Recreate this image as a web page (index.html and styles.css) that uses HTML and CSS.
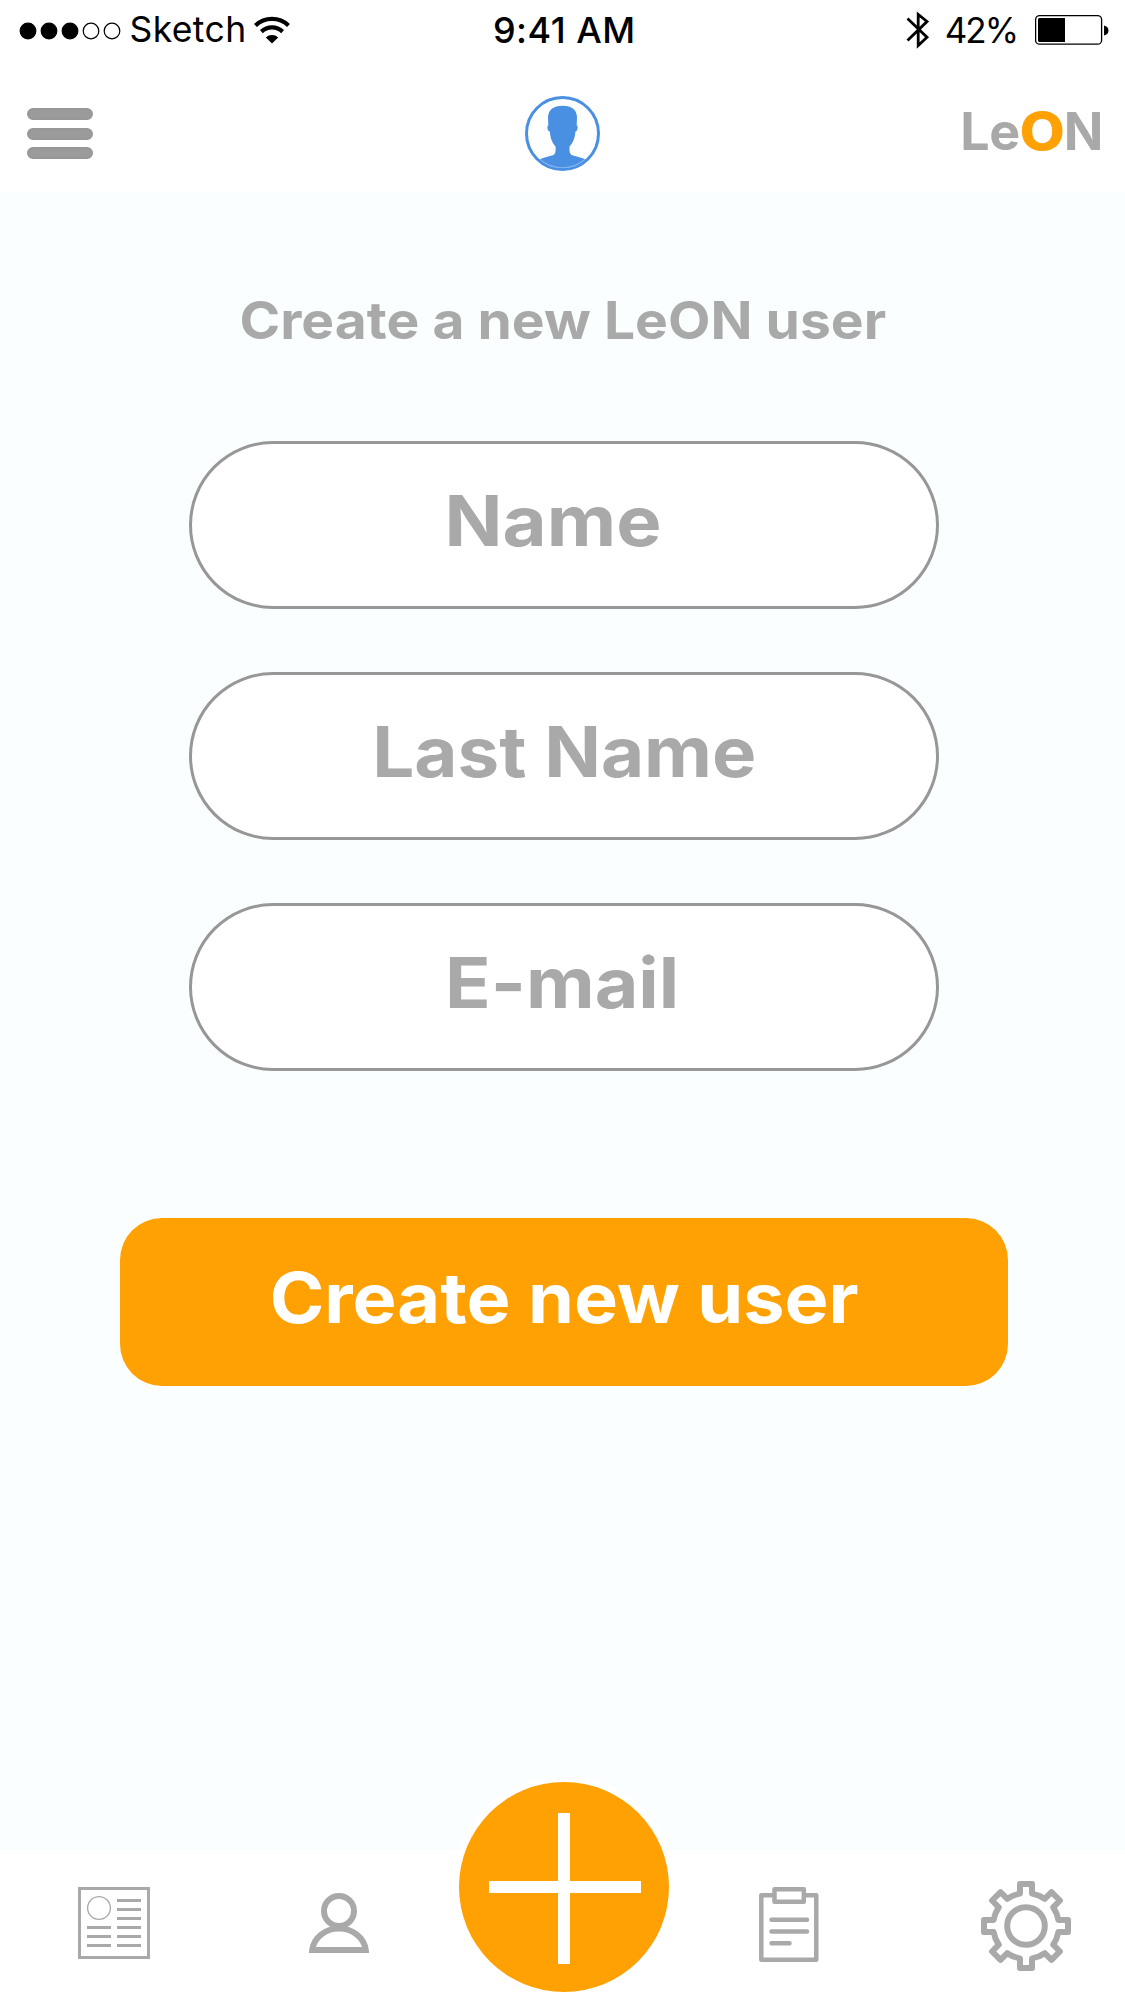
FILE: index.html
```html
<!DOCTYPE html>
<html lang="en">
<head>
<meta charset="utf-8">
<title>LeON – Create user</title>
<link rel="stylesheet" href="styles.css">
</head>
<body>
<div class="app">
  <header class="top">
    <div class="status">
      <div class="carrier">
        <svg width="102" height="18" viewBox="0 0 102 18"><g stroke="#000" stroke-width="1.2"><circle cx="9" cy="9" r="7.8"/><circle cx="30" cy="9" r="7.8"/><circle cx="51" cy="9" r="7.8"/><circle cx="72" cy="9" r="7.8" fill="none"/><circle cx="93" cy="9" r="7.8" fill="none"/></g></svg>
        <span class="carrier-name">Sketch</span>
        <svg class="wifi" width="36" height="28" viewBox="0 0 36 28"><g fill="none" stroke="#000" stroke-width="4.2"><path d="M1.5 9.4A24 24 0 0 1 34.5 9.4"/><path d="M7.4 15.6A15.5 15.5 0 0 1 28.6 15.6"/></g><path d="M11.8 21.4A9 9 0 0 1 24.2 21.4L18 27.5Z"/></svg>
      </div>
      <time class="clock">9:41 AM</time>
      <div class="power">
        <svg width="24" height="40" viewBox="0 0 24 40"><path d="M1.5 8.5L21 27.2L12.2 35.5V4.5L21 11.5L1.5 30.5" fill="none" stroke="#000" stroke-width="2.8"/></svg>
        <span class="percent">42%</span>
        <svg class="battery" width="75" height="30" viewBox="0 0 75 30"><rect x=".6" y=".6" width="66" height="28.6" rx="4" fill="none" stroke="#000" stroke-width="1.3"/><path d="M4.5 3H30V27H4.500Q3 27 3 25.500V4.500Q3 3 4.500 3ZM69 10.500Q73.500 11.500 73.500 15.500T69 20.500Z"/></svg>
      </div>
    </div>
    <div class="bar">
      <div class="menu"><i></i><i></i><i></i></div>
      <svg class="avatar" width="75" height="75" viewBox="0 0 75 75"><circle cx="37.500" cy="37.500" r="36" fill="none" stroke="#4a90e2" stroke-width="3"/><path fill="#4a90e2" d="M37.600 9.700C47 9.700 52 14 52 21.500L51.700 29.300Q53.300 30 52.300 33.500Q51.800 35.500 50.500 35.600C50 42 48 47 44.500 50.700V54.500Q44.500 58 46.500 59C51 60.800 56 61 60.500 63.500A35 35 0 0 1 14.500 63.500C19 61 24 60.800 28.500 59Q30.600 58 30.600 54.500V50.700C27 47 25.200 42 24.800 35.600Q23.200 35.500 22.700 33.500Q21.800 30 23.300 29.300L23 21.500C23 14 28.500 9.700 37.600 9.700Z"/><path d="M15 63.200A34.300 34.300 0 0 0 60 63.200" fill="none" stroke="#a8c9f1" stroke-width=".6"/></svg>
      <div class="logo"><span>Le<b>O</b>N</span></div>
    </div>
  </header>
  <main class="content">
    <h1 class="title"><span>Create a new LeON user</span></h1>
    <form class="form">
      <div class="field field-name"><span>Name</span></div>
      <div class="field field-last"><span>Last Name</span></div>
      <div class="field field-mail"><span>E-mail</span></div>
      <button class="submit" type="button"><span>Create new user</span></button>
    </form>
  </main>
  <nav class="tabs">
    <svg class="news" width="72" height="72" viewBox="0 0 72 72" fill="none" stroke="#a9a9a9"><path stroke-width="3" d="M1.500 1.500H70.500V70.500H1.500ZM39 13.500H63M39 22.500H63M39 31.500H63M39 40.500H63M39 49.500H63M39 58.500H63M9 40.500H33M9 49.500H33M9 58.500H33"/><circle cx="21" cy="21" r="11.400" stroke-width="1.300"/></svg>
    <svg class="person" width="60" height="60" viewBox="0 0 60 60" fill="none" stroke="#a9a9a9" stroke-width="6"><circle cx="30" cy="18" r="15"/><path d="M3.200 57A27 24.500 0 0 1 56.800 57Z"/></svg>
    <svg class="clipboard" width="60" height="75" viewBox="0 0 60 75" fill="none" stroke="#a9a9a9" stroke-width="4.500" stroke-linejoin="round" stroke-linecap="round"><path d="M15.500 8.300H2.300V72.700H57.300V8.300H44.800M15.500 2.300H44.800V14.800H15.500ZM12.500 32.800H48M12.500 44.600H48M12.500 56.300H30.500"/></svg>
    <svg class="gear" width="90" height="90" viewBox="0 0 90 90" fill="none" stroke="#a9a9a9" stroke-width="6" stroke-linejoin="round"><circle cx="45" cy="45" r="18.800"/><path d="M39 3H51V12.600A33 33 0 0 1 63.700 17.800L70.500 11.100L78.900 19.500L72.200 26.300A33 33 0 0 1 77.400 39H87V51H77.400A33 33 0 0 1 72.200 63.700L78.900 70.500L70.500 78.900L63.700 72.200A33 33 0 0 1 51 77.400V87H39V77.400A33 33 0 0 1 26.300 72.200L19.500 78.900L11.100 70.500L17.800 63.700A33 33 0 0 1 12.600 51H3V39H12.600A33 33 0 0 1 17.800 26.300L11.100 19.500L19.500 11.100L26.300 17.800A33 33 0 0 1 39 12.600Z"/></svg>
    <svg class="add" width="222" height="222" viewBox="0 0 222 222"><circle cx="111" cy="111" r="111" fill="#fff"/><circle cx="111" cy="111" r="105" fill="#ffa103"/><path d="M36 111H188M111 37V188" stroke="#fff" stroke-width="12"/></svg>
  </nav>
</div>
</body>
</html>
```
FILE: styles.css
```css
* { box-sizing: border-box; }
body { margin: 0; font-family: Inter, "Open Sans", sans-serif; }
svg { display: block; flex: none; }
.app { width: 1125px; height: 2001px; display: flex; flex-direction: column; background: #fbfeff; }
.top { height: 192px; background: #fff; }

.status { height: 60px; display: grid; grid-template-columns: 1fr auto 1fr; align-items: center; padding: 0 15px 0 18.500px; font-size: 35.500px; line-height: 56px; color: #000; }
.carrier { display: flex; align-items: center; }
.carrier svg { margin-top: 1px; }
.carrier-name { margin-left: 9px; letter-spacing: .4px; }
.carrier .wifi { margin: 0 0 0 7px; }
.clock { font-weight: 500; font-size: 36px; letter-spacing: .5px; }
.power { display: flex; align-items: center; justify-content: flex-end; }
.percent { margin: 0 18px 0 15px; font-size: 35px; letter-spacing: -2px; }
.power .battery { margin-top: 0; }

.bar { height: 132px; padding: 0 22px; display: grid; grid-template-columns: 1fr auto 1fr; align-items: start; }
.menu { margin: 48px 0 0 5px; width: 66px; display: grid; gap: 7.500px; }
.menu i { height: 12px; border-radius: 6px; background: #9b9b9b; border: 2px solid #979797; }
.avatar { margin-top: 36px; }
.logo { justify-self: end; margin-top: 44px; font-size: 52px; line-height: 56px; font-weight: 700; letter-spacing: -.5px; color: #a9a9a9; }
.logo b { display: inline-block; margin: 0 2.500px 0 2px; color: #ffa103; font-weight: 800; transform: scaleX(1.13); }

.title span, .field span, .submit span, .logo span { display: inline-block; white-space: nowrap; }
.title span { transform: scaleX(1.061); }
.field-name span { transform: scaleX(1.095); }
.field-last span { transform: scaleX(1.071); }
.field-mail span { transform: scaleX(1.083); }
.submit span { transform: scaleX(1.0625); }

.content { flex: 1; display: flex; flex-direction: column; align-items: center; padding-top: 99px; }
.title { margin: 0; font-size: 52px; line-height: 60px; font-weight: 700; color: #a9a9a9; }
.form { margin: 90px 0 0 3px; display: flex; flex-direction: column; align-items: center; gap: 63px; }
.field { width: 750px; height: 168px; border: 3px solid #979797; border-radius: 84px; background: #fff; display: flex; align-items: center; justify-content: center; padding-bottom: 8px; font-size: 69.500px; font-weight: 700; color: #a9a9a9; }
.field-name { padding-right: 22px; }
.field-mail { padding-right: 3px; }
.submit { width: 888px; height: 168px; margin-top: 84px; border: 0; border-radius: 42px; background: #ffa103; color: #fff; font: 700 69.500px/1 Inter, sans-serif; padding: 0 0 6px; }

.tabs { position: relative; height: 151px; background: #fff; display: flex; align-items: flex-start; padding-left: 78px; }
.news { margin-top: 37px; }
.person { margin: 43px 0 0 159px; }
.clipboard { margin: 37px 0 0 390px; }
.gear { margin: 31px 0 0 162px; }
.add { position: absolute; left: 453px; top: -74px; }
```
